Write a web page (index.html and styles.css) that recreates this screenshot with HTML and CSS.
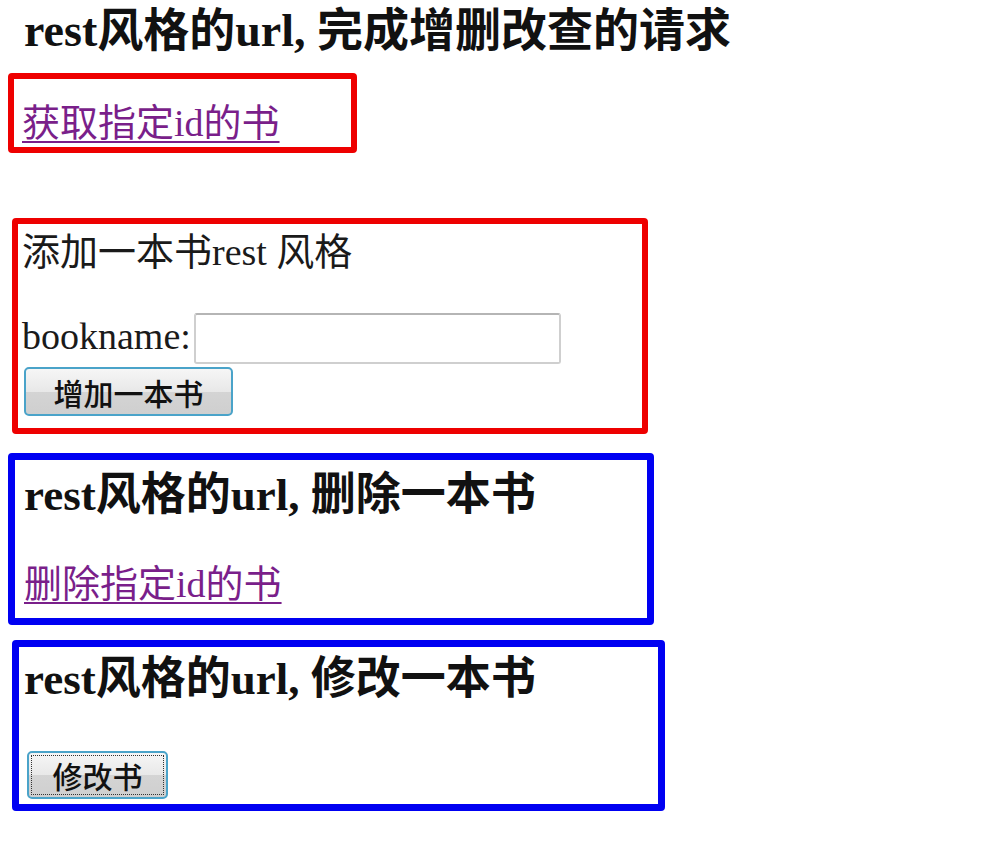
FILE: index.html
```html
<!DOCTYPE html>
<html lang="zh-CN">
<head>
<meta charset="utf-8">
<title>rest风格的url</title>
<link rel="stylesheet" href="styles.css">
</head>
<body>
<div class="page">
  <h1 class="title">rest风格的url, 完成增删改查的请求</h1>

  <div class="box box-red box-get">
    <a class="link" href="#">获取指定id的书</a>
  </div>

  <form class="box box-red box-add">
    <p class="plain">添加一本书rest 风格</p>
    <div class="field">
      <label class="plain" for="bookname">bookname:</label><input class="input" id="bookname" type="text">
    </div>
    <button class="btn btn-add" type="button">增加一本书</button>
  </form>

  <div class="box box-blue box-del">
    <h2 class="title sub">rest风格的url, 删除一本书</h2>
    <a class="link" href="#">删除指定id的书</a>
  </div>

  <form class="box box-blue box-edit">
    <h2 class="title sub">rest风格的url, 修改一本书</h2>
    <button class="btn btn-edit" type="button"><span class="focus">修改书</span></button>
  </form>
</div>
</body>
</html>
```

FILE: styles.css
```css
html, body {
  margin: 0;
  padding: 0;
  background: #ffffff;
}

.page {
  font-family: "Liberation Serif", "Noto Sans CJK SC", serif;
  color: #111;
  display: flex;
  flex-direction: column;
  align-items: flex-start;
  padding-top: 4px;
}

.title {
  margin: 0;
  font-size: 46px;
  font-weight: bold;
  line-height: 54px;
  letter-spacing: 0;
}

.title.sub {
  font-size: 45px;
}

.page > .title {
  margin-left: 24px;
}

.box {
  box-sizing: border-box;
  border-style: solid;
  border-radius: 4px;
  margin: 0;
}

.box-red {
  border-color: #ee0000;
  border-width: 6px;
}

.box-blue {
  border-color: #0000f2;
  border-width: 7px;
}

.box-get {
  margin-top: 15px;
  margin-left: 8px;
  width: 349px;
  height: 80px;
  padding: 22px 0 0 8px;
}

.link {
  font-size: 38px;
  line-height: 44px;
  color: #7a1f8a;
  text-decoration: underline;
  text-decoration-thickness: 2px;
  text-underline-offset: 5px;
  letter-spacing: 0;
}

.box-add {
  margin-top: 65px;
  margin-left: 12px;
  width: 636px;
  height: 216px;
  padding: 6px 0 0 4px;
  display: flex;
  flex-direction: column;
  align-items: flex-start;
}

.plain {
  margin: 0;
  font-size: 38px;
  line-height: 44px;
  color: #1a1a1a;
  letter-spacing: 0;
}

.field {
  display: flex;
  align-items: flex-end;
  margin-top: 39px;
}

.input {
  box-sizing: border-box;
  width: 367px;
  height: 51px;
  margin-left: 3px;
  border: 2px solid #cfcfcf;
  border-top-color: #b5b5b5;
  border-radius: 3px;
  background: #fff;
  margin-bottom: -6px;
}

.btn {
  box-sizing: border-box;
  font-family: "Noto Sans CJK SC", sans-serif;
  font-weight: 500;
  color: #111;
  border: 2px solid #4aa3c9;
  border-radius: 5px;
  background: linear-gradient(#f6f6f6 0%, #e8e8e8 50%, #d4d4d4 51%, #cfcfcf 100%);
  padding: 0;
  cursor: pointer;
}

.btn-add {
  margin-top: 9px;
  margin-left: 2px;
  width: 209px;
  height: 49px;
  font-size: 30px;
  line-height: 44px;
}

.box-del {
  margin-top: 19px;
  margin-left: 8px;
  width: 646px;
  height: 172px;
  padding: 8px 0 0 9px;
}

.box-del .link {
  display: inline-block;
  margin-top: 40px;
  margin-left: 0;
}

.box-edit {
  margin-top: 15px;
  margin-left: 12px;
  width: 653px;
  height: 171px;
  padding: 5px 0 0 5px;
  display: flex;
  flex-direction: column;
  align-items: flex-start;
}

.btn-edit {
  margin-top: 45px;
  margin-left: 3px;
  width: 141px;
  height: 48px;
  font-size: 30px;
  line-height: 38px;
  padding: 2px;
}

.focus {
  display: block;
  height: 100%;
  border: 1px dotted #333;
  box-sizing: border-box;
  line-height: 38px;
}
```
